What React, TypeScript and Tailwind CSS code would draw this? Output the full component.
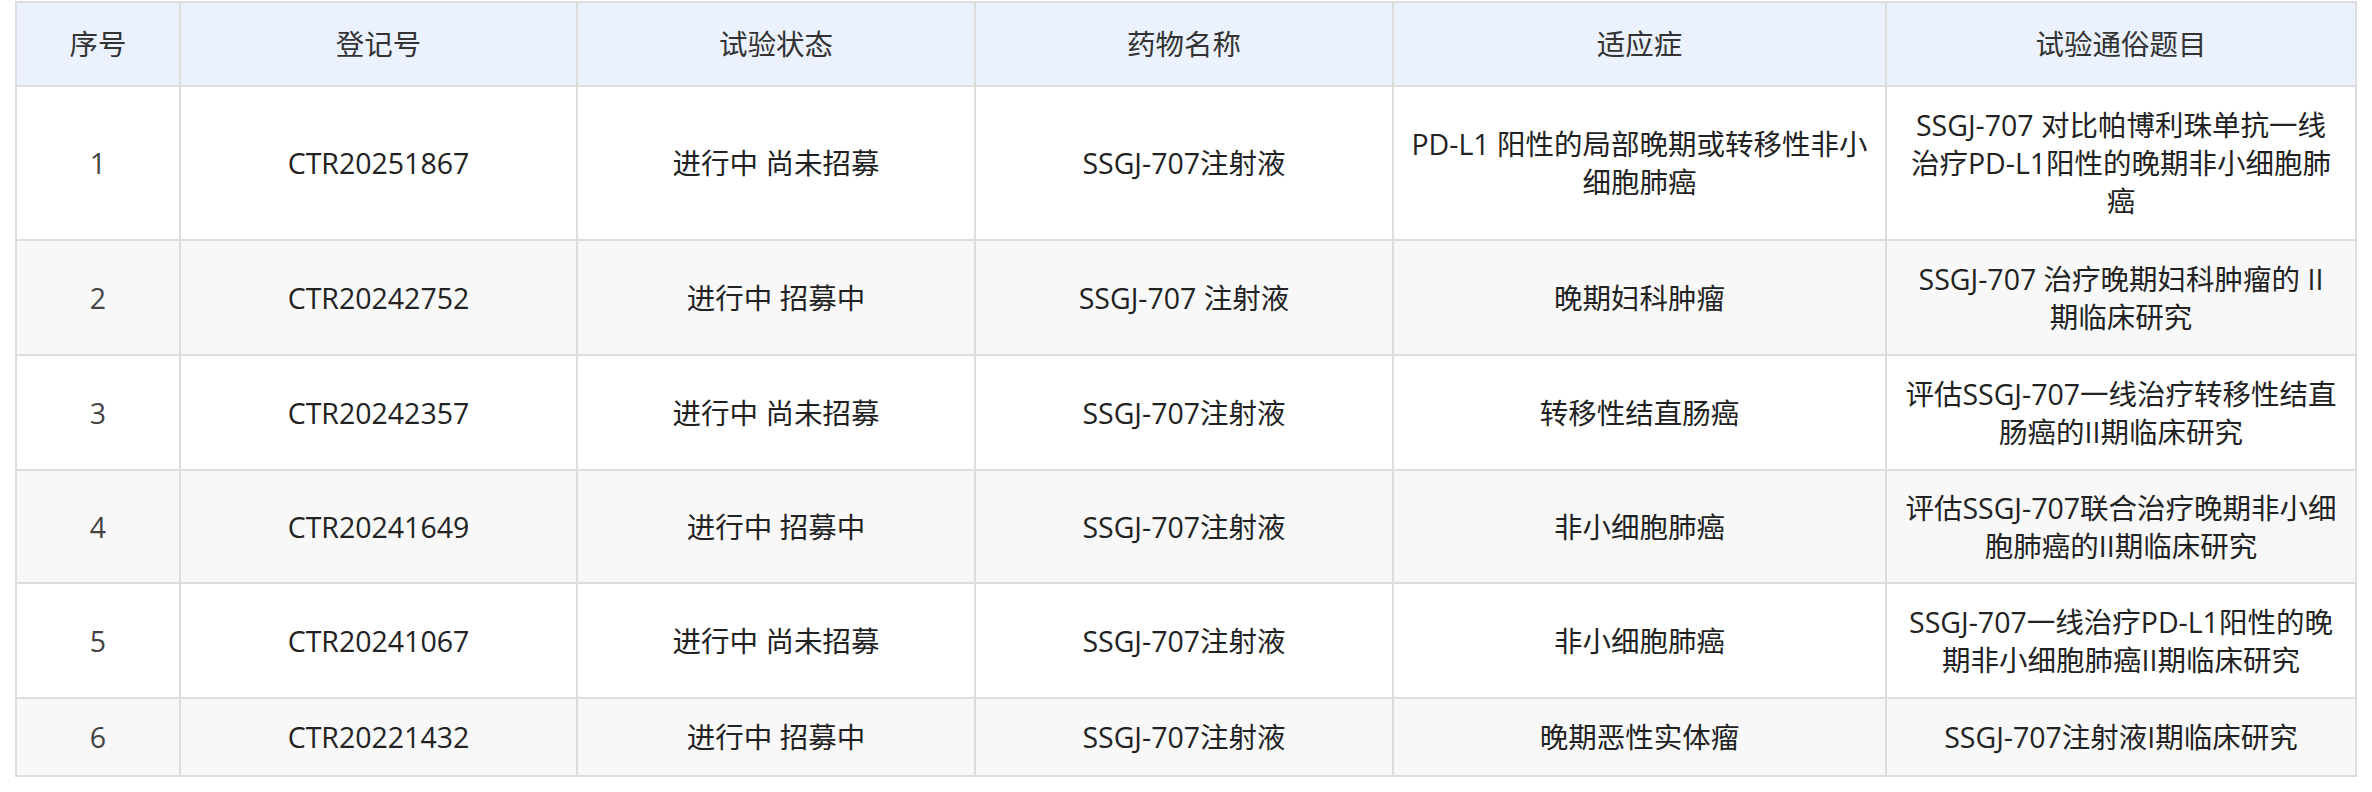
import React from 'react'

type Row = {
  no: number
  reg: string
  status: string
  drug: string
  indication: string[]
  title: string[]
  h: string
  striped: boolean
}

const rows: Row[] = [
  {
    no: 1,
    reg: 'CTR20251867',
    status: '进行中 尚未招募',
    drug: 'SSGJ-707注射液',
    indication: ['PD-L1 阳性的局部晚期或转移性非小', '细胞肺癌'],
    title: ['SSGJ-707 对比帕博利珠单抗一线', '治疗PD-L1阳性的晚期非小细胞肺', '癌'],
    h: 'h-[154px]',
    striped: false,
  },
  {
    no: 2,
    reg: 'CTR20242752',
    status: '进行中 招募中',
    drug: 'SSGJ-707 注射液',
    indication: ['晚期妇科肿瘤'],
    title: ['SSGJ-707 治疗晚期妇科肿瘤的 II', '期临床研究'],
    h: 'h-[115px]',
    striped: true,
  },
  {
    no: 3,
    reg: 'CTR20242357',
    status: '进行中 尚未招募',
    drug: 'SSGJ-707注射液',
    indication: ['转移性结直肠癌'],
    title: ['评估SSGJ-707一线治疗转移性结直', '肠癌的II期临床研究'],
    h: 'h-[115px]',
    striped: false,
  },
  {
    no: 4,
    reg: 'CTR20241649',
    status: '进行中 招募中',
    drug: 'SSGJ-707注射液',
    indication: ['非小细胞肺癌'],
    title: ['评估SSGJ-707联合治疗晚期非小细', '胞肺癌的II期临床研究'],
    h: 'h-[113px]',
    striped: true,
  },
  {
    no: 5,
    reg: 'CTR20241067',
    status: '进行中 尚未招募',
    drug: 'SSGJ-707注射液',
    indication: ['非小细胞肺癌'],
    title: ['SSGJ-707一线治疗PD-L1阳性的晚', '期非小细胞肺癌II期临床研究'],
    h: 'h-[115px]',
    striped: false,
  },
  {
    no: 6,
    reg: 'CTR20221432',
    status: '进行中 招募中',
    drug: 'SSGJ-707注射液',
    indication: ['晚期恶性实体瘤'],
    title: ['SSGJ-707注射液I期临床研究'],
    h: 'h-[78px]',
    striped: true,
  },
]

const headers = ['序号', '登记号', '试验状态', '药物名称', '适应症', '试验通俗题目']

const Lines = ({ lines }: { lines: string[] }) => (
  <>
    {lines.map((l, i) => (
      <span key={i} className="block whitespace-nowrap">
        {l}
      </span>
    ))}
  </>
)

const App: React.FC = () => {
  const cell = 'border-2 border-[#dddddd] px-2 text-center align-middle'
  return (
    <div
      className="min-h-[792px] w-[2372px] bg-white pl-[15px] pt-px text-[28.5px] leading-[38px] text-[#222222]"
      style={{ fontFamily: '"Open Sans", "Noto Sans CJK SC", sans-serif' }}
    >
      <table className="w-[2340px] table-fixed border-collapse">
        <colgroup>
          <col className="w-[164px]" />
          <col className="w-[397px]" />
          <col className="w-[398px]" />
          <col className="w-[418px]" />
          <col className="w-[493px]" />
          <col className="w-[470px]" />
        </colgroup>
        <thead>
          <tr className="h-[84px] bg-[#ebf2fe]">
            {headers.map((h) => (
              <th key={h} className={cell + ' font-normal text-[#333333]'}>
                {h}
              </th>
            ))}
          </tr>
        </thead>
        <tbody>
          {rows.map((r) => (
            <tr key={r.no} className={r.h + (r.striped ? ' bg-[#f8f8f8]' : ' bg-white')}>
              <td className={cell + ' text-[#444444]'}>{r.no}</td>
              <td className={cell}>{r.reg}</td>
              <td className={cell}>{r.status}</td>
              <td className={cell}>{r.drug}</td>
              <td className={cell}>
                <Lines lines={r.indication} />
              </td>
              <td className={cell}>
                <Lines lines={r.title} />
              </td>
            </tr>
          ))}
        </tbody>
      </table>
    </div>
  )
}

export default App
